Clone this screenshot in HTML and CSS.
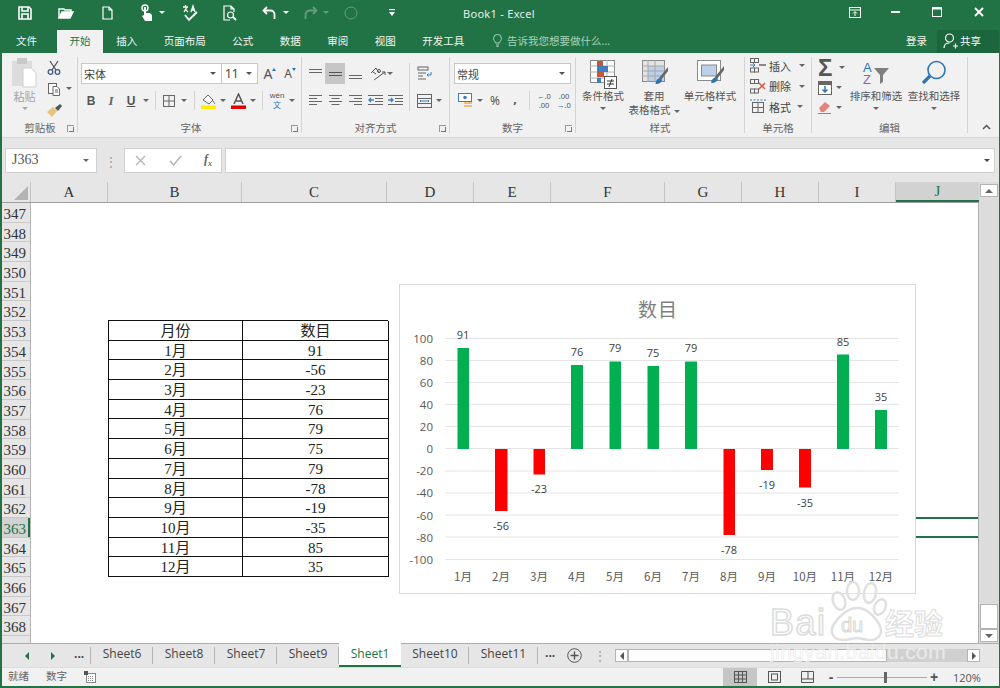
FILE: index.html
```html
<!DOCTYPE html>
<html lang="zh">
<head>
<meta charset="utf-8">
<title>Book1 - Excel</title>
<link rel="stylesheet" href="styles.css">
</head>
<body>
<div class="window">
  <header class="titlebar">
    <div class="qat">
      <span class="q"><svg width="16" height="16" viewBox="0 0 16 16" fill="none" stroke="#fff" stroke-width="1.6"><path d="M2 2h10l2 2v10H2z"/><path d="M5 2v4h6V2M5 14v-5h6v5"/></svg></span>
      <span class="q"><svg width="18" height="16" viewBox="0 0 18 16" fill="none" stroke="#fff" stroke-width="1.4"><path d="M2 13V4h5l1 1h6v2"/><path d="M2 13l3-6h11l-3 6z" fill="#fff"/></svg></span>
      <span class="q"><svg width="14" height="16" viewBox="0 0 14 16" fill="none" stroke="#fff" stroke-width="1.2"><path d="M3 2h6l3 3v9H3z"/><path d="M9 2v3h3"/></svg></span>
      <span class="q"><svg width="14" height="18" viewBox="0 0 14 18" fill="#fff"><circle cx="5" cy="4" r="3" fill="none" stroke="#fff" stroke-width="1.4"/><path d="M4 3h2v6h4l2 2v6H5l-3-5 2-1z"/></svg><i class="caret w"></i></span>
      <span class="q nudge"><svg width="18" height="18" viewBox="0 0 18 18" fill="none" stroke="#fff" stroke-width="1.3"><path d="M2 3h5M4.500 1v2M3 8l3-5M4 5l3 3M10 8l2-6 2 6M11 6h2"/><path d="M4 11l4 5 8-8" stroke-width="1.8"/></svg></span>
      <span class="q nudge"><svg width="16" height="18" viewBox="0 0 16 18" fill="none" stroke="#fff" stroke-width="1.2"><path d="M8 16H2V2h7l3 3v3M9 2v3h3"/><circle cx="8.500" cy="11" r="3"/><path d="M11 13l3 3" stroke-width="1.8"/></svg></span>
      <span class="q"><svg width="16" height="14" viewBox="0 0 16 14" fill="none" stroke="#fff" stroke-width="1.8"><path d="M5 1L1.500 4.500 5 8"/><path d="M2 4.500h6.500a4 4 0 0 1 4 4V13"/></svg><i class="caret w"></i></span>
      <span class="q dim"><svg width="16" height="14" viewBox="0 0 16 14" fill="none" stroke="#fff" stroke-width="1.8"><path d="M11 1l3.500 3.500L11 8"/><path d="M14 4.500H7.500a4 4 0 0 0-4 4V13"/></svg><i class="caret w"></i></span>
      <span class="q dim"><svg width="14" height="14" viewBox="0 0 14 14" fill="none" stroke="#fff"><circle cx="7" cy="7" r="6"/></svg></span>
      <span class="q"><svg width="8" height="8" viewBox="0 0 8 8" fill="#fff"><rect x="1" y="0" width="6" height="1.200"/><path d="M1 3h6L4 7z"/></svg></span>
    </div>
    <div class="doc-title">Book1 - Excel</div>
    <div class="winbtns">
      <span class="wb"><svg width="12" height="11" viewBox="0 0 12 11" fill="none" stroke="#fff"><rect x="0.500" y="0.500" width="11" height="10"/><path d="M0 3h12M6 9V5M4 6.500l2-2 2 2"/></svg></span>
      <span class="wb"><svg width="9" height="2" viewBox="0 0 9 2"><rect width="9" height="2" fill="#fff"/></svg></span>
      <span class="wb"><svg width="10" height="10" viewBox="0 0 10 10" fill="none" stroke="#fff"><rect x="0.500" y="0.500" width="9" height="9"/><path d="M0 1.500h10" stroke-width="2"/></svg></span>
      <span class="wb"><svg width="10" height="10" viewBox="0 0 10 10" stroke="#fff" stroke-width="1.800"><path d="M1 1l8 8M9 1l-8 8"/></svg></span>
    </div>
  </header>

  <nav class="tabs">
    <span class="tab file">文件</span>
    <span class="tab on">开始</span>
    <span class="tab">插入</span>
    <span class="tab">页面布局</span>
    <span class="tab">公式</span>
    <span class="tab">数据</span>
    <span class="tab">审阅</span>
    <span class="tab">视图</span>
    <span class="tab">开发工具</span>
    <span class="tell"><svg width="9" height="13" viewBox="0 0 9 13" fill="none" stroke="#a6d3ba"><path d="M2.500 9C2 7 .6 6.500.6 4.300a3.900 3.900 0 0 1 7.800 0C8.400 6.500 7 7 6.500 9zM3 11h3M3.500 12.500h2"/></svg>告诉我您想要做什么...</span>
    <span class="login">登录</span>
    <span class="share"><svg width="15" height="16" viewBox="0 0 15 16" fill="none" stroke="#fff" stroke-width="1.200"><circle cx="6.500" cy="5" r="4"/><path d="M1 15c0-3 2-5 5.500-5M10 13h5M12.500 10.500v5"/></svg>共享</span>
  </nav>

  <section class="ribbon">
    <div class="grp g-clip">
      <div class="body clipb">
        <div class="big dimmed">
          <svg class="h30" width="27" height="30" viewBox="0 0 27 30"><rect x="1" y="3" width="20" height="25" fill="#dcdcdc"/><rect x="6" y="0" width="10" height="6" fill="#c8c8c8"/><path d="M12 10h8l5 5v14H12z" fill="#fff" stroke="#cfcfcf"/></svg>
          <span class="bl grey">粘贴</span><i class="caret grey-c"></i>
        </div>
        <div class="stack">
          <span class="mini"><svg width="14" height="15" viewBox="0 0 14 15" fill="none" stroke="#3f5f7f" stroke-width="1.300"><path d="M3 1l6 9M11 1L5 10" stroke="#555"/><circle cx="3.500" cy="12" r="2.300"/><circle cx="10.500" cy="12" r="2.300"/></svg></span>
          <span class="mini"><svg width="14" height="14" viewBox="0 0 14 14" fill="#fff" stroke="#666"><rect x="1.500" y="1.500" width="8" height="10"/><path d="M6 4.500h4l2.500 2.500v6.500H6z"/><path d="M8 8h3M8 10h3" /></svg><i class="caret"></i></span>
          <span class="mini"><svg width="15" height="14" viewBox="0 0 15 14"><path d="M0 9l6-5 4 4-5 6z" fill="#eac37a"/><path d="M8 5l5-4 2 2-4 5z" fill="#555"/></svg></span>
        </div>
      </div>
      <div class="glabel">剪贴板<i class="launch"></i></div>
    </div>

    <div class="grp g-font">
      <div class="body">
        <div class="row">
          <span class="combo c-font">宋体<i class="caret"></i></span>
          <span class="combo c-size">11<i class="caret"></i></span>
          <span class="cell grow">A<sup class="tri up"></sup></span>
          <span class="cell shrink">A<sup class="tri dn"></sup></span>
        </div>
        <div class="row">
          <span class="cell fmt b">B</span>
          <span class="cell fmt i">I</span>
          <span class="cell fmt u">U</span>
          <span class="cc"><i class="caret"></i></span>
          <i class="sep s1"></i>
          <span class="cell"><svg width="12" height="12" viewBox="0 0 12 12" fill="none" stroke="#666"><rect x="0.500" y="0.500" width="11" height="11"/><path d="M6 0v12M0 6h12"/></svg></span>
          <span class="cc"><i class="caret"></i></span>
          <i class="sep s2"></i>
          <span class="cell"><svg width="15" height="16" viewBox="0 0 15 16"><path d="M2 7l5-5 5 5-4 4z" fill="#fff" stroke="#666"/><path d="M12 8c1 1.500 2 2.500 1.500 3" stroke="#3f7fbf" fill="none"/><rect y="12.500" width="15" height="3.500" fill="#ffee00"/></svg></span>
          <span class="cc"><i class="caret"></i></span>
          <span class="cell"><svg width="15" height="16" viewBox="0 0 15 16"><path d="M3 11L7.500 1 12 11M4.700 8h5.600" fill="none" stroke="#555" stroke-width="1.500"/><rect y="12.500" width="15" height="3.500" fill="#e00000"/></svg></span>
          <span class="cc"><i class="caret"></i></span>
          <i class="sep s3"></i>
          <span class="cell wen"><small>wén</small><b>文</b></span>
          <span class="cc"><i class="caret"></i></span>
        </div>
      </div>
      <div class="glabel">字体<i class="launch"></i></div>
    </div>

    <div class="grp g-align">
      <div class="body split">
        <div class="col-a">
          <div class="row">
            <span class="cell"><svg width="13" height="12" viewBox="0 0 13 12" stroke="#666"><path d="M0 1.500h13M0 4.500h13"/></svg></span>
            <span class="cell on"><svg width="13" height="12" viewBox="0 0 13 12" stroke="#555"><path d="M0 4.500h13M0 7.500h13"/></svg></span>
            <span class="cell"><svg width="13" height="12" viewBox="0 0 13 12" stroke="#666"><path d="M0 7.500h13M0 10.500h13"/></svg></span>
            <span class="cell orient"><svg width="16" height="14" viewBox="0 0 16 14" fill="none" stroke="#555"><path d="M1 6l5-5 3 5M3 5l3 2"/><circle cx="9" cy="4" r="1.500"/><path d="M4 13L15 5M12 5h3v3"/></svg></span>
            <span class="cc tight"><i class="caret"></i></span>
          </div>
          <div class="row">
            <span class="cell"><svg width="13" height="11" viewBox="0 0 13 11" stroke="#666"><path d="M0 .5h13M0 3.500h8M0 6.500h13M0 9.500h8"/></svg></span>
            <span class="cell"><svg width="13" height="11" viewBox="0 0 13 11" stroke="#666"><path d="M0 .5h13M2.500 3.500h8M0 6.500h13M2.500 9.500h8"/></svg></span>
            <span class="cell"><svg width="13" height="11" viewBox="0 0 13 11" stroke="#666"><path d="M0 .5h13M5 3.500h8M0 6.500h13M5 9.500h8"/></svg></span>
            <span class="cell"><svg width="15" height="11" viewBox="0 0 15 11" fill="none" stroke="#666"><path d="M0 .5h15M7 3.500h8M7 6.500h8M0 9.500h15"/><path d="M6 5H1M3 3L1 5l2 2" stroke="#3f7fbf" stroke-width="1.300"/></svg></span>
            <span class="cell"><svg width="15" height="11" viewBox="0 0 15 11" fill="none" stroke="#666"><path d="M0 .5h15M7 3.500h8M7 6.500h8M0 9.500h15"/><path d="M0 5h5M3 3l2 2-2 2" stroke="#3f7fbf" stroke-width="1.300"/></svg></span>
          </div>
        </div>
        <div class="col-b">
          <div class="row">
            <span class="cell"><svg width="15" height="15" viewBox="0 0 15 15" fill="none" stroke="#666"><rect x="1" y="1" width="10" height="3"/><path d="M1 7h8M1 10h5M1 13h8"/><path d="M14 6v3h-4M11.500 7.500L10 9l1.500 1.500" stroke="#3f7fbf"/></svg></span>
          </div>
          <div class="row">
            <span class="cell"><svg width="15" height="14" viewBox="0 0 15 14" fill="none" stroke="#666"><rect x="0.500" y="0.500" width="14" height="13"/><path d="M0 4.500h15M0 9.500h15"/><path d="M3 7h9M4 6L3 7l1 1M11 6l1 1-1 1" stroke="#3f7fbf"/></svg></span>
            <span class="cc"><i class="caret"></i></span>
          </div>
        </div>
      </div>
      <div class="glabel">对齐方式<i class="launch"></i></div>
    </div>

    <div class="grp g-num">
      <div class="body">
        <div class="row"><span class="combo c-num">常规<i class="caret"></i></span></div>
        <div class="row">
          <span class="cell acct"><svg width="15" height="15" viewBox="0 0 15 15"><rect x="0.500" y="0.500" width="13" height="8" fill="#fff" stroke="#3f7fbf"/><circle cx="7" cy="4.500" r="1.800" fill="#3f7fbf"/><rect x="6" y="9" width="8" height="2" fill="#eac37a"/><rect x="6" y="12" width="8" height="2" fill="#eac37a"/></svg></span>
          <span class="cc"><i class="caret"></i></span>
          <span class="cell pct">%</span>
          <span class="cell comma">,</span>
          <i class="sep s4"></i>
          <span class="cell dec"><em><u class="ar">←</u>.0</em><em>.00</em></span>
          <span class="cell dec"><em>.00</em><em><u class="ar">→</u>.0</em></span>
        </div>
      </div>
      <div class="glabel">数字<i class="launch"></i></div>
    </div>

    <div class="grp g-style">
      <div class="body tallrow">
        <div class="big w-cond">
          <svg width="27" height="29" viewBox="0 0 27 29"><g fill="#fff" stroke="#8a8a8a"><rect x="0.500" y="0.500" width="24" height="22"/></g><path d="M9 0v23M17 0v23M0 6h25M0 12h25M0 18h25" stroke="#b0b0b0"/><rect x="7" y="1" width="6" height="5" fill="#c8553a"/><rect x="7" y="6" width="11" height="6" fill="#3f7fbf"/><rect x="7" y="12" width="7" height="5" fill="#c8553a"/><rect x="7" y="18" width="4" height="5" fill="#3f7fbf"/><rect x="14.500" y="16.500" width="12" height="12" fill="#fff" stroke="#555"/><path d="M17 21h7M17 24h7M22 19l-3 8" stroke="#333" fill="none"/></svg>
          <span class="bl">条件格式</span><i class="caret"></i>
        </div>
        <div class="big w-table">
          <svg class="pad2" width="27" height="27" viewBox="0 0 27 27"><rect x="0.500" y="0.500" width="22" height="21" fill="#e4e4e4" stroke="#8a8a8a"/><rect x="6" y="6" width="16" height="15" fill="#bcd0ea"/><path d="M6 0v22M13 0v22M0 6h23M0 11h23M0 16h23" stroke="#a8a8a8"/><path d="M26 7l-9 11 2 2 7-9z" fill="#666"/><path d="M18 18c-3 1-4 2-4.500 6 3 .3 6-1 6.500-4z" fill="#2e75b6"/></svg>
          <span class="bl">套用</span><span class="bl second">表格格式<i class="caret inl"></i></span>
        </div>
        <div class="big w-cell">
          <svg class="pad2" width="27" height="27" viewBox="0 0 27 27"><rect x="0.500" y="0.500" width="23" height="20" fill="#fff" stroke="#8a8a8a"/><rect x="4.500" y="5" width="15" height="11" fill="#bcd0ea" stroke="#8a8a8a"/><path d="M27 6l-9 11 2 2 7-9z" fill="#666"/><path d="M19 17c-3 1-4 2-5 6 3 .3 6-1 7-4z" fill="#2e75b6"/></svg>
          <span class="bl">单元格样式</span><i class="caret"></i>
        </div>
      </div>
      <div class="glabel">样式</div>
    </div>

    <div class="grp g-cells">
      <div class="body cellcmds">
        <div class="cmd"><svg width="16" height="15" viewBox="0 0 16 15" fill="none" stroke="#666"><rect x="0.500" y="0.500" width="4" height="4"/><rect x="4.500" y="0.500" width="4" height="4"/><rect x="0.500" y="10" width="4" height="4"/><rect x="4.500" y="10" width="4" height="4"/><path d="M0 7h5M3 5l2 2-2 2" stroke="#3f7fbf"/><path d="M9 7h7" stroke-width="1.500"/></svg><span>插入</span><i class="caret"></i></div>
        <div class="cmd"><svg width="16" height="15" viewBox="0 0 16 15" fill="none" stroke="#666"><rect x="0.500" y="0.500" width="4" height="4"/><rect x="4.500" y="0.500" width="4" height="4"/><rect x="0.500" y="10" width="4" height="4"/><rect x="4.500" y="10" width="4" height="4"/><path d="M9 4l6 6M15 4l-6 6" stroke="#d9573a" stroke-width="1.500"/></svg><span>删除</span><i class="caret"></i></div>
        <div class="cmd"><svg width="16" height="15" viewBox="0 0 16 15" fill="none" stroke="#666"><rect x="2.500" y="3.500" width="11" height="10"/><path d="M2 8.500h12M8 3v11"/><path d="M0 1h16" stroke="#3f7fbf" stroke-dasharray="2 1.500"/></svg><span>格式</span><i class="caret close"></i></div>
      </div>
      <div class="glabel">单元格</div>
    </div>

    <div class="grp g-edit">
      <div class="body editb">
        <div class="stack wide">
          <span class="mini"><span class="sigma">Σ</span><i class="caret"></i></span>
          <span class="mini"><svg width="14" height="14" viewBox="0 0 14 14" fill="#fff" stroke="#666"><rect x="0.500" y="0.500" width="13" height="13"/><rect x="1" y="1" width="12" height="2.500" fill="#666"/><path d="M7 5v6M4.500 8.500L7 11l2.500-2.500" fill="none" stroke="#2e75b6" stroke-width="1.500"/></svg><i class="caret"></i></span>
          <span class="mini"><svg width="14" height="13" viewBox="0 0 14 13"><path d="M1 7l6-6 5 4-6 6H3z" fill="#e8827a"/><path d="M0 12.500h13" stroke="#888"/></svg><i class="caret"></i></span>
        </div>
        <div class="big w-sort">
          <svg class="pad3" width="28" height="26" viewBox="0 0 28 26"><text x="1" y="12" class="az a">A</text><text x="1" y="24" class="az z">Z</text><path d="M12 8h15l-6 7v7l-3 2v-9z" fill="#7f7f7f"/></svg>
          <span class="bl">排序和筛选</span><i class="caret"></i>
        </div>
        <div class="big w-find">
          <svg class="pad3" width="26" height="26" viewBox="0 0 26 26" fill="none" stroke="#2e75b6"><circle cx="15.500" cy="10" r="8.500" stroke-width="1.600"/><path d="M9 16l-7 7" stroke-width="3.200"/></svg>
          <span class="bl">查找和选择</span><i class="caret"></i>
        </div>
      </div>
      <div class="glabel">编辑</div>
    </div>
    <div class="collapse"><svg width="9" height="6" viewBox="0 0 9 6" fill="none" stroke="#555" stroke-width="1.500"><path d="M1 5l3.500-3.500L8 5"/></svg></div>
  </section>

  <section class="fbar">
    <div class="namebox">J363<i class="caret"></i></div>
    <div class="vdots">⋮</div>
    <div class="fx-btns">
      <svg width="11" height="11" viewBox="0 0 11 11" stroke="#b4b4b4" stroke-width="1.300"><path d="M1 1l9 9M10 1l-9 9"/></svg>
      <svg width="13" height="11" viewBox="0 0 13 11" fill="none" stroke="#b4b4b4" stroke-width="1.500"><path d="M1 6l3.500 4L12 1"/></svg>
      <span class="fx">f<sub>x</sub></span>
    </div>
    <div class="finput"><i class="caret"></i></div>
  </section>

  <main class="sheet">
    <div class="colhead">
      <span class="corner"><i></i></span>
      <span class="ch a">A</span><span class="ch b">B</span><span class="ch cc2">C</span><span class="ch d">D</span><span class="ch e">E</span><span class="ch f">F</span><span class="ch g">G</span><span class="ch h">H</span><span class="ch i2">I</span><span class="ch j">J</span>
    </div>
    <div class="vscroll">
      <span class="vbtn"><i class="tri-u"></i></span>
      <span class="vtrack"></span>
      <span class="vthumb"></span>
      <span class="vbtn"><i class="tri-d"></i></span>
    </div>
    <div class="rowhead">
      <span>347</span><span>348</span><span>349</span><span>350</span><span>351</span><span>352</span><span>353</span><span>354</span><span>355</span><span>356</span><span>357</span><span>358</span><span>359</span><span>360</span><span>361</span><span>362</span><span class="sel">363</span><span>364</span><span>365</span><span>366</span><span>367</span><span>368</span>
    </div>
    <div class="cells">
      <div class="data">
        <span class="m">月份</span><span class="n">数目</span>
        <span class="m">1月</span><span class="n">91</span>
        <span class="m">2月</span><span class="n">-56</span>
        <span class="m">3月</span><span class="n">-23</span>
        <span class="m">4月</span><span class="n">76</span>
        <span class="m">5月</span><span class="n">79</span>
        <span class="m">6月</span><span class="n">75</span>
        <span class="m">7月</span><span class="n">79</span>
        <span class="m">8月</span><span class="n">-78</span>
        <span class="m">9月</span><span class="n">-19</span>
        <span class="m">10月</span><span class="n">-35</span>
        <span class="m">11月</span><span class="n">85</span>
        <span class="m">12月</span><span class="n">35</span>
      </div>
      <div class="selcell"></div>
      <div class="chart">
        <svg width="517" height="310" viewBox="399 284 517 310">
          <text x="658" y="317" class="ct">数目</text>
          <g class="gl">
            <path d="M445 338.500h454M445 360.500h454M445 382.500h454M445 404.500h454M445 426.500h454M445 448.500h454M445 471h454M445 493h454M445 515h454M445 537h454M445 559.500h454"/>
          </g>
          <g class="yl">
            <text x="433" y="343">100</text><text x="433" y="365">80</text><text x="433" y="387">60</text><text x="433" y="409">40</text><text x="433" y="431">20</text><text x="433" y="453">0</text><text x="433" y="475">-20</text><text x="433" y="497">-40</text><text x="433" y="520">-60</text><text x="433" y="542">-80</text><text x="433" y="564">-100</text>
          </g>
          <g class="pos">
            <rect x="457.500" y="348" width="11.500" height="101"/><rect x="571" y="365" width="12" height="84"/><rect x="609.500" y="361.500" width="11.500" height="87.500"/><rect x="647.500" y="366" width="11.500" height="83"/><rect x="685" y="361.500" width="12" height="87.500"/><rect x="837" y="354.500" width="12" height="94.500"/><rect x="875" y="410" width="12" height="39"/>
          </g>
          <g class="neg">
            <rect x="495" y="449" width="12.500" height="62"/><rect x="533.500" y="449" width="11.500" height="25.500"/><rect x="723.500" y="449" width="11.500" height="86"/><rect x="761" y="449" width="12" height="21"/><rect x="799" y="449" width="12" height="38.500"/>
          </g>
          <g class="dl">
            <text x="463" y="339">91</text><text x="501" y="530">-56</text><text x="539" y="493">-23</text><text x="577" y="356">76</text><text x="615" y="352">79</text><text x="653" y="357">75</text><text x="691" y="352">79</text><text x="729" y="554">-78</text><text x="767" y="489">-19</text><text x="805" y="507">-35</text><text x="843" y="346">85</text><text x="881" y="401">35</text>
          </g>
          <g class="xl">
            <text x="463" y="581">1月</text><text x="501" y="581">2月</text><text x="539" y="581">3月</text><text x="577" y="581">4月</text><text x="615" y="581">5月</text><text x="653" y="581">6月</text><text x="691" y="581">7月</text><text x="729" y="581">8月</text><text x="767" y="581">9月</text><text x="805" y="581">10月</text><text x="843" y="581">11月</text><text x="881" y="581">12月</text>
          </g>
        </svg>
      </div>
    </div>
  </main>

  <section class="sheettabs">
    <div class="nav">
      <i class="tl"></i><i class="tr"></i><span class="more">...</span>
    </div>
    <span class="st">Sheet6</span><span class="st">Sheet8</span><span class="st">Sheet7</span><span class="st">Sheet9</span><span class="st active">Sheet1</span><span class="st s10">Sheet10</span><span class="st s11">Sheet11</span>
    <span class="more m2">...</span>
    <svg class="addsheet" width="15" height="15" viewBox="0 0 15 15" fill="none" stroke="#555"><circle cx="7.500" cy="7.500" r="6.800"/><path d="M7.500 3.500v8M3.500 7.500h8" stroke-width="1.400"/></svg>
    <span class="hdots">⋮</span>
    <div class="hscroll">
      <span class="hbtn"><i class="hl"></i></span><span class="hthumb"></span><span class="htrack"></span><span class="hbtn"><i class="hr"></i></span>
    </div>
  </section>

  <footer class="status">
    <span class="s-ready">就绪</span>
    <span class="s-num">数字</span>
    <svg class="s-macro" width="12" height="12" viewBox="0 0 12 12"><rect x="2.500" y="2.500" width="9" height="9" fill="#fff" stroke="#888"/><rect width="4" height="4" fill="#555"/><path d="M4 5.500h6M4 7.500h6M4 9.500h6" stroke="#888" stroke-dasharray="1 1"/></svg>
    <div class="viewbtns">
      <span class="vb on"><svg width="13" height="12" viewBox="0 0 13 12" fill="none" stroke="#555"><rect x="0.500" y="0.500" width="12" height="11"/><path d="M4.500 0v12M8.500 0v12M0 4h13M0 8h13"/></svg></span>
      <span class="vb"><svg width="13" height="12" viewBox="0 0 13 12" fill="none" stroke="#555"><rect x="0.500" y="0.500" width="12" height="11"/><rect x="3.500" y="3" width="6" height="6"/></svg></span>
      <span class="vb v3"><svg width="13" height="12" viewBox="0 0 13 12" fill="none" stroke="#555"><path d="M.5 11.500V.5h12v11zM0 8h13M7 0v8" /></svg></span>
    </div>
    <div class="zoomer">
      <span class="zm">-</span><span class="slider"><i></i></span><span class="zm">+</span>
    </div>
    <span class="pct-lbl">120%</span>
  </footer>

  <svg class="watermark" width="190" height="95" viewBox="0 0 190 95" aria-hidden="true">
    <g class="wm-paw">
      <ellipse cx="77" cy="23" rx="6" ry="9" transform="rotate(-20 77 23)"/>
      <ellipse cx="91" cy="13" rx="6" ry="9"/>
      <ellipse cx="108" cy="15" rx="6" ry="10" transform="rotate(10 108 15)"/>
      <ellipse cx="118" cy="29" rx="5.500" ry="8" transform="rotate(25 118 29)"/>
      <path d="M95 30c9 0 17 8 22 16 5 9 0 16-9 16-5 0-9-2-13-2s-9 2-14 2c-10 0-14-8-9-16 5-8 14-16 23-16z"/>
    </g>
    <text x="8" y="57" class="wm-bai">Bai</text>
    <text x="79" y="54" class="wm-du">du</text>
    <text x="123" y="57" class="wm-jy">经验</text>
    <text x="8" y="81" class="wm-url">jingyan.baidu.com</text>
  </svg>
</div>
</body>
</html>
```
FILE: styles.css
```css
* { box-sizing: border-box; }
html, body { margin: 0; padding: 0; }
body { width: 1000px; height: 688px; overflow: hidden; font-family: "Noto Sans CJK SC", "Noto Sans", sans-serif; font-size: 11px; color: #444; }
i, em, u { font-style: normal; text-decoration: none; }
.window { position: relative; width: 1000px; height: 688px; display: flex; flex-direction: column; background: #f1f1f1; border: 2px solid #217346; border-top: 0; border-right-width: 1px; overflow: hidden; }

.caret { display: inline-block; width: 0; height: 0; border: 3px solid transparent; border-top: 3.500px solid #666; border-bottom: 0; flex: none; }
.caret.w { border-top-color: #fff; margin: 0 -11px 0 5px; }
.caret.grey-c { border-top-color: #a8a8a8; }

/* title bar */
.titlebar { height: 27px; background: #217346; display: flex; align-items: center; color: #fff; flex: none; margin-left: -2px; margin-right: -1px; }
.qat { display: flex; width: 412px; padding-left: 5px; flex: none; }
.q { width: 41px; height: 20px; display: flex; align-items: center; justify-content: center; padding-bottom: 2px; }
.q.nudge { padding-left: 3px; }
.q.dim { opacity: .3; }
.doc-title { flex: 1; padding-left: 51px; font-family: "Noto Sans", sans-serif; font-size: 11px; letter-spacing: .3px; color: #e6f0ea; }
.winbtns { display: flex; }
.wb { width: 42px; height: 20px; display: flex; align-items: center; justify-content: center; padding-bottom: 3px; }
.wb:first-child { padding-left: 3px; }

/* tabs */
.tabs { height: 26px; background: #217346; display: flex; align-items: flex-end; color: #fff; flex: none; font-size: 10.500px; margin: 0 -1px 0 -2px; }
.tab { height: 23px; padding: 0 13.250px 2px; display: flex; align-items: center; white-space: nowrap; color: #f2f7f4; }
.tab.file { padding: 0 20px 2px 16px; }
.tab.on { background: #f1f1f1; color: #217346; padding: 0 12.500px 2px; }
.tell { height: 23px; padding-bottom: 2px; display: flex; align-items: center; gap: 5px; margin-left: 15.500px; color: #a6d3ba; width: 124px; white-space: nowrap; }
.login { height: 23px; margin-left: 289px; line-height: 21px; color: #f2f7f4; width: 31px; font-size: 10.500px; }
.share { height: 23px; width: 63px; background: #1c663d; display: flex; align-items: center; gap: 2px; padding: 0 0 2px 6px; color: #fff; }

/* ribbon */
.ribbon { height: 85px; flex: none; display: flex; background: #f1f1f1; border-bottom: 1px solid #d6d6d6; position: relative; padding-left: 1px; }
.grp { display: flex; flex-direction: column; border-right: 1px solid transparent; position: relative; flex: none; }
.grp::after { content: ""; position: absolute; right: -1px; top: 4px; bottom: 4px; width: 1px; background: #d4d4d4; }
.body { height: 67px; padding-top: 10px; display: flex; flex-direction: column; gap: 6px; }
.glabel { text-align: center; font-size: 10.500px; color: #666; line-height: 16px; position: relative; }
.launch { position: absolute; right: 3px; top: 5px; width: 7px; height: 7px; border-left: 1px solid #999; border-top: 1px solid #999; }
.launch::after { content: ""; position: absolute; right: 0; bottom: 0; width: 4px; height: 4px; border-right: 1px solid #777; border-bottom: 1px solid #777; }
.row { display: flex; height: 21px; align-items: center; flex: none; }
.cell { width: 20px; height: 21px; display: flex; align-items: center; justify-content: center; flex: none; color: #555; position: relative; }
.cell.on { background: #c6c6c6; }
.cc { width: 10px; display: flex; justify-content: center; flex: none; }
.cc.tight { width: 6px; margin-left: -1px; }
.sep { width: 1px; height: 19px; background: #d4d4d4; flex: none; }
.s1 { margin: 0 3px 0 4px; }
.s2 { margin: 0 3px 0 5px; }
.s3 { margin: 0 4px; }
.s4 { margin: 0 4px; }

.g-clip { width: 75px; }
.clipb { flex-direction: row; gap: 0; padding-top: 5px; padding-left: 8px; }
.big { display: flex; flex-direction: column; align-items: center; flex: none; position: relative; }
.big svg { flex: none; }
.big .bl { line-height: 14px; white-space: nowrap; font-size: 10.500px; color: #555; }
.big .bl.second { margin-top: 0; }
.big > .caret { margin-top: 4px; }
.big .bl.grey { color: #a4a4a4; font-size: 11px; }
.big svg.pad2 { margin-bottom: 2px; }
.big svg.pad3 { margin-bottom: 3px; overflow: visible; }
.big svg.h30 { margin-bottom: 1px; }
.dimmed { width: 27px; }
.stack { display: flex; flex-direction: column; gap: 4px; margin-left: 8px; padding-top: 1px; }
.mini { height: 17px; display: flex; align-items: center; gap: 5px; }
.stack .mini { padding-left: 1px; }

.g-font { width: 224px; padding-left: 3px; }
.combo { height: 21px; background: #fff; border: 1px solid #c8c8c8; display: flex; align-items: center; justify-content: space-between; padding: 0 5px 0 2px; color: #444; flex: none; font-size: 11px; }
.combo .caret { border-top-color: #555; }
.c-font { width: 141px; }
.c-size { width: 36px; border-left: 0; font-family: "Noto Sans", sans-serif; font-size: 12px; padding-left: 3px; }
.c-num { width: 117px; margin-left: 4px; }
.grow, .shrink { font-family: "Noto Sans", sans-serif; color: #555; }
.grow { font-size: 14px; }
.shrink { font-size: 12px; }
.tri { position: absolute; top: 5px; right: 2px; width: 0; height: 0; border: 2.500px solid transparent; }
.tri.up { border-bottom: 3px solid #2e75b6; border-top: 0; }
.tri.dn { border-top: 3px solid #2e75b6; border-bottom: 0; }
.fmt { font-family: "Liberation Serif", serif; font-size: 13px; }
.fmt.b { font-family: "Liberation Sans", sans-serif; font-weight: bold; font-size: 12px; }
.fmt.i { font-style: italic; font-weight: bold; color: #666; }
.fmt.u { font-family: "Liberation Sans", sans-serif; text-decoration: underline; font-weight: bold; font-size: 12px; }
.wen { flex-direction: column; }
.wen small { font-family: "Liberation Sans", sans-serif; font-size: 8px; line-height: 8px; color: #555; }
.wen b { font-size: 8px; line-height: 9px; font-weight: normal; color: #2e75b6; }

.g-align { width: 148px; }
.split { flex-direction: row; gap: 0; padding-left: 3px; }
.col-a { width: 105px; display: flex; flex-direction: column; gap: 6px; border-right: 1px solid #d4d4d4; height: 48px; }
.col-b { padding-left: 4px; display: flex; flex-direction: column; gap: 6px; }
.orient { margin-left: 3px; }

.g-num { width: 126px; }
.acct { margin-left: 5px; }
.pct { font-family: "Noto Sans", sans-serif; font-size: 12px; }
.comma { font-family: "Noto Sans", sans-serif; font-size: 13px; font-weight: bold; padding-bottom: 5px; }
.dec { flex-direction: column; font-family: "Noto Sans", sans-serif; font-size: 7.500px; line-height: 9px; }
.dec em { display: block; }
.ar { color: #2e75b6; }

.g-style { width: 169px; }
.tallrow { flex-direction: row; gap: 0; padding-top: 7px; }
.w-cond { width: 52px; margin-left: 1px; }
.w-table { width: 50px; }
.w-table svg { margin-left: 2px; }
.w-table .caret.inl { margin-left: 3px; vertical-align: middle; }
.w-cell { width: 62px; }

.g-cells { width: 67px; }
.cellcmds { gap: 3px; padding-top: 4px; padding-left: 5px; }
.cmd { display: flex; align-items: center; height: 17.500px; font-size: 11px; color: #444; }
.cmd span { margin-left: 3px; width: 30px; }
.cmd .caret.close { margin-left: -2px; }
.cmd svg { flex: none; }

.g-edit { width: 156px; }
.editb { flex-direction: row; gap: 0; padding-top: 5px; }
.wide { margin-left: 5px; width: 36px; gap: 3px; }
.sigma { width: 17px; font-family: "Liberation Sans", sans-serif; font-size: 24px; font-weight: bold; line-height: 17px; color: #555; }
.wide .mini { gap: 4px; }
.w-sort { width: 58px; margin-left: -6px; padding-top: 2px; }
.w-find { width: 58px; padding-top: 2px; }
.az { font-family: "Liberation Sans", sans-serif; font-size: 13px; }
.az.a { fill: #2e75b6; }
.az.z { fill: #8f5fb8; }
.collapse { position: absolute; right: 8px; bottom: 4px; }

/* formula bar */
.fbar { height: 44px; flex: none; background: #e6e6e6; display: flex; align-items: center; padding: 0 4px 0 3px; }
.namebox { width: 92px; height: 25px; background: #fff; border: 1px solid #d0d0d0; display: flex; align-items: center; justify-content: space-between; padding: 0 7px 0 6px; font-family: "Liberation Serif", serif; font-size: 14px; color: #555; }
.vdots { width: 27px; text-align: center; color: #999; font-size: 12px; }
.fx-btns { width: 98px; height: 25px; background: #fff; border: 1px solid #d0d0d0; display: flex; align-items: center; justify-content: space-between; padding: 0 9px 0 10px; }
.fx { font-family: "Liberation Serif", serif; font-style: italic; font-size: 12px; font-weight: bold; color: #666; }
.fx sub { font-size: 8px; }
.finput { width: 770px; height: 25px; margin-left: 3px; background: #fff; border: 1px solid #d0d0d0; display: flex; align-items: center; justify-content: flex-end; padding-right: 4px; }
.finput .caret { border-top-color: #444; }

/* sheet */
.sheet { flex: 1; min-height: 0; display: grid; grid-template-columns: 29px 948px 20px; grid-template-rows: 21px 1fr; background: #fff; overflow: hidden; }
.colhead { grid-column: 1 / 3; display: flex; background: #e6e6e6; border-bottom: 1px solid #9e9e9e; font-family: "Liberation Serif", serif; font-size: 15px; color: #333; }
.corner { width: 29px; flex: none; position: relative; border-right: 1px solid #c4c4c4; }
.corner i { position: absolute; right: 2px; bottom: 2px; width: 0; height: 0; border-left: 14px solid transparent; border-bottom: 14px solid #b4b4b4; }
.ch { display: flex; align-items: center; justify-content: center; border-right: 1px solid #c4c4c4; flex: none; }
.ch.a { width: 77px; } .ch.b { width: 134px; } .ch.cc2 { width: 145px; } .ch.d { width: 87px; } .ch.e { width: 77px; }
.ch.f { width: 114px; } .ch.g { width: 77px; } .ch.h { width: 77px; } .ch.i2 { width: 77px; }
.ch.j { width: 83px; background: #d2d2d2; color: #217346; border-bottom: 2px solid #217346; border-right: 0; }
.rowhead { grid-column: 1; grid-row: 2; background: #e6e6e6; border-right: 1px solid #b4b4b4; display: flex; flex-direction: column; overflow: hidden; font-family: "Liberation Serif", serif; font-size: 15px; color: #333; min-height: 0; }
.rowhead span { height: 19.700px; flex: none; text-align: right; padding-right: 4px; line-height: 22px; border-bottom: 1px solid #c8c8c8; overflow: hidden; }
.rowhead span.sel { background: #d2d2d2; color: #217346; box-shadow: inset -2px 0 0 #217346; }
.cells { grid-column: 2; grid-row: 2; position: relative; padding: 117px 0 0 77px; min-height: 0; overflow: hidden; border-right: 1px solid #aeaeae; }
.data { display: grid; width: 280px; grid-template-columns: 134px 146px; grid-auto-rows: 19.700px; border-top: 1px solid #111; border-left: 1px solid #111; font-family: "Liberation Serif", "Noto Sans CJK SC", serif; font-size: 15px; color: #222; }
.data span { text-align: center; border-right: 1px solid #111; border-bottom: 1px solid #111; line-height: 21px; overflow: hidden; }
.selcell { position: absolute; left: 885px; top: 314px; width: 64px; height: 21px; border-top: 2px solid #217346; border-bottom: 2px solid #217346; }
.selcell::after { content: ""; position: absolute; right: -1px; bottom: -3px; width: 3px; height: 4px; background: #217346; }
.chart { position: absolute; left: 368px; top: 81px; width: 517px; height: 310px; background: #fff; border: 1px solid #d9d9d9; }
.chart svg { position: absolute; left: -1px; top: -1px; display: block; }
.ct { font-family: "Noto Sans CJK SC", sans-serif; font-size: 19px; fill: #7f7f7f; text-anchor: middle; letter-spacing: 1px; }
.gl path { stroke: #e4e4e4; stroke-width: 1; fill: none; }
.yl text { font-family: "Open Sans", sans-serif; font-size: 11.500px; fill: #595959; text-anchor: end; }
.dl text { font-family: "Open Sans", sans-serif; font-size: 11px; fill: #404040; text-anchor: middle; }
.xl text { font-family: "Noto Sans CJK SC", sans-serif; font-size: 11.500px; fill: #595959; text-anchor: middle; }
.pos rect { fill: #00b050; }
.neg rect { fill: #ff0000; }

/* vertical scroll */
.vscroll { grid-column: 3; grid-row: 1 / 3; background: #dcdcdc; display: flex; flex-direction: column; padding: 2px 1px 1px; }
.vbtn { height: 13px; background: #fff; border: 1px solid #b4b4b4; display: flex; align-items: center; justify-content: center; flex: none; }
.vtrack { flex: 1; }
.vthumb { height: 25px; background: #fff; border: 1px solid #b4b4b4; flex: none; }
.tri-u, .tri-d { width: 0; height: 0; border: 4px solid transparent; }
.tri-u { border-bottom: 4px solid #666; border-top: 0; }
.tri-d { border-top: 4px solid #666; border-bottom: 0; }

/* sheet tabs */
.sheettabs { height: 24px; flex: none; background: #e6e6e6; display: flex; align-items: stretch; border-top: 1px solid #ababab; font-family: "Open Sans", sans-serif; font-size: 12px; color: #444; position: relative; }
.nav { width: 89px; display: flex; align-items: center; padding-left: 23px; flex: none; border-right: 1px solid #b4b4b4; margin: 3px 0; }
.tl, .tr { width: 0; height: 0; border: 4px solid transparent; }
.tl { border-right: 4px solid #217346; border-left: 0; }
.tr { border-left: 4px solid #217346; border-right: 0; margin-left: 22px; }
.more { margin-left: 19px; font-weight: bold; color: #444; line-height: 14px; padding-bottom: 4px; }
.st { width: 62px; display: flex; align-items: center; justify-content: center; flex: none; position: relative; padding-bottom: 4px; }
.st::after { content: ""; position: absolute; right: 0; top: 3px; bottom: 3px; width: 1px; background: #b4b4b4; }
.st.active { background: #fff; color: #217346; border-bottom: 2px solid #217346; width: 62px; margin-top: -1px; padding-bottom: 2px; }
.st.active::after { display: none; }
.st.s10 { width: 68px; }
.st.s11 { width: 69px; }
.m2 { margin-left: 7px; align-self: center; padding-bottom: 6px; }
.addsheet { align-self: center; margin-left: 12px; flex: none; }
.hdots { align-self: center; margin-left: 12px; color: #999; font-size: 12px; width: 20px; }
.hscroll { align-self: center; width: 365px; height: 13px; margin-left: 1px; display: flex; background: #d0d0d0; flex: none; }
.hbtn { width: 13px; background: #fff; border: 1px solid #b4b4b4; display: flex; align-items: center; justify-content: center; flex: none; }
.hthumb { width: 259px; background: #fff; border: 1px solid #b4b4b4; flex: none; }
.htrack { flex: 1; }
.hl, .hr { width: 0; height: 0; border: 4px solid transparent; }
.hl { border-right: 4px solid #555; border-left: 0; }
.hr { border-left: 4px solid #555; border-right: 0; }

/* status bar */
.status { height: 19px; flex: none; display: flex; align-items: center; background: #f1f1f1; border-top: 1px solid #dcdcdc; font-size: 10.500px; color: #666; }
.s-ready { margin-left: 6px; width: 38px; padding-bottom: 3px; }
.s-num { width: 38px; padding-bottom: 3px; }
.s-macro { flex: none; }
.viewbtns { display: flex; margin-left: 627px; height: 18px; }
.vb { width: 34px; display: flex; align-items: center; justify-content: center; }
.vb.v3 { padding-right: 2px; }
.vb.on { background: #c6c6c6; }
.zoomer { display: flex; align-items: center; }
.zm { width: 12px; text-align: center; font-family: "Liberation Sans", sans-serif; font-size: 14px; font-weight: bold; color: #555; line-height: 16px; }
.slider { width: 90px; height: 1px; background: #aaa; position: relative; }
.slider i { position: absolute; left: 47px; top: -5px; width: 3px; height: 11px; background: #666; }
.zm:last-child { margin-left: 1px; }
.pct-lbl { margin-left: 13px; font-family: "Open Sans", sans-serif; font-size: 11px; color: #555; }

/* watermark */
.watermark { position: absolute; left: 760px; top: 578px; pointer-events: none; }
.wm-paw ellipse, .wm-paw path { fill: rgba(255,255,255,.35); stroke: #e0e0e0; stroke-width: 2.500; }
.wm-bai { font-family: "Liberation Sans", sans-serif; font-size: 36px; letter-spacing: 1.500px; fill: rgba(255,255,255,.6); stroke: #dcdcdc; stroke-width: 1.500px; }
.wm-du { font-family: "Liberation Sans", sans-serif; font-size: 20px; fill: rgba(255,255,255,.6); stroke: #d8d8d8; stroke-width: 1px; }
.wm-jy { font-family: "Noto Sans CJK SC", sans-serif; font-weight: bold; font-size: 29px; fill: rgba(255,255,255,.7); stroke: #dcdcdc; stroke-width: 1px; }
.wm-url { font-family: "Liberation Sans", sans-serif; font-size: 21px; fill: rgba(255,255,255,.6); stroke: rgba(225,225,225,.8); stroke-width: .6px; letter-spacing: .4px; }
```
